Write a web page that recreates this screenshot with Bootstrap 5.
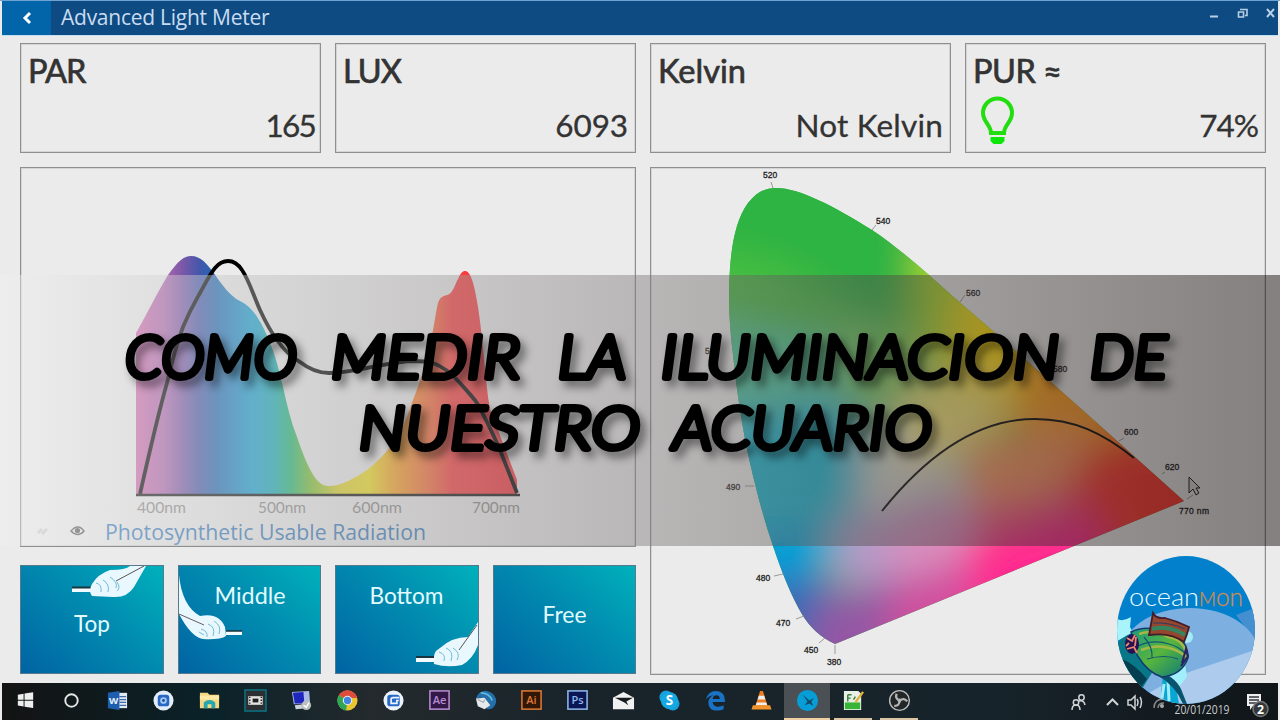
<!DOCTYPE html>
<html lang="es">
<head>
    <meta charset="UTF-8">
    <meta name="viewport" content="width=device-width, initial-scale=1.0">
    <title>Advanced Light Meter</title>
    <link rel="stylesheet" href="https://cdn.jsdelivr.net/npm/bootstrap@5.3.0/dist/css/bootstrap.min.css">
    <style>
        body {
            width: 1280px;
            height: 720px;
            font-family: 'Lato', sans-serif;
            background-color: #ebebeb;
            color: #333;
            line-height: 1;
        }
        .screen {
            height: 720px;
            padding: 0 2px;
            border-top: 1px solid #6fa3d3;
        }
        .titlebar {
            height: 34px;
            background-color: #0e4b82;
            color: #c9dcf2;
        }
        .back {
            width: 49px;
            background-color: #0264a9;
        }
        .app-title {
            font: 21px 'Open Sans', sans-serif;
            letter-spacing: -.25px;
            padding: 0 0 2px 10px;
            white-space: nowrap;
        }
        .meter {
            display: grid;
            grid-template-columns: repeat(4, 1fr);
            grid-template-rows: 110px 394px 128px;
            column-gap: 14px;
            padding: 7px 12px 0 18px;
            border-top: 1px solid #c3dff2;
        }
        .box {
            border: 1px solid #8f8f8f;
            box-shadow: inset 0 0 0 1px #d4d4d4;
        }
        .reading {
            padding: 11px 7px 11px;
            font-size: 32.5px;
        }
        .reading .name { -webkit-text-stroke: .7px #333; }
        .reading .value {
            font-size: 31.5px;
            letter-spacing: -.1px;
            -webkit-text-stroke: .3px #333;
        }
        .wide { grid-column: span 2; margin-top: 14px; }
        .tall { grid-row: span 2; }
        .caption { height: 27px; font-family: 'Open Sans', sans-serif; }
        .place {
            margin-top: 18px;
            margin-bottom: 1px;
            border: 1px solid #58788c;
            border-radius: 0;
            background: linear-gradient(42deg, #0163a3 0%, #018db0 58%, #00b1bb 100%);
            font-size: 22.5px;
            -webkit-text-stroke: .7px #e2fbff;
        }
        .taskbar {
            height: 37px;
            margin-top: 8px;
            background: linear-gradient(90deg, #131313 0, #0a2229 210px, #242a2d 370px, #19242a 560px, #17232a 1000px, #101518 100%);
        }
        .task { width: 46px; border-bottom: 2px solid transparent; }
        .task.open { border-color: #dcc6a4; margin: 0 4px; width: 38px; }
        .task.active { background-color: #4a5053; border-color: #f0cfa2; }
        .tray { font: 12.3px 'Open Sans', sans-serif; }
        .band {
            top: 275px;
            height: 271px;
            background: linear-gradient(90deg, rgba(240, 240, 240, .455), rgba(10, 0, 0, .455));
        }
        .headline {
            font: italic 300 60px 'Lato', sans-serif;
            stroke: #000;
            stroke-width: 6;
            stroke-linejoin: round;
            filter: drop-shadow(5px 6px 4px rgba(0, 0, 0, .45));
        }
        .brand { left: 1117px; top: 556px; }
        svg { display: block; }
    </style>
</head>
<body class="m-0 overflow-hidden position-relative">
    <div class="screen">
        <header class="titlebar d-flex">
            <div class="back d-flex align-items-center justify-content-center">
                <svg width="14" height="16" viewBox="0 0 14 16"><path d="M10 3 5 8l5 5" fill="none" stroke="#fff" stroke-width="3"/></svg>
            </div>
            <div class="app-title flex-grow-1 d-flex align-items-center">Advanced Light Meter</div>
            <svg width="72" height="24" viewBox="1206 1 72 24" fill="none" stroke="#b9cfe6" stroke-width="2">
                <path d="M1210 16.500h8"/>
                <path d="M1240 9.500h7v6h-2M1238.500 12h5v5h-5z" stroke-width="1.600"/>
                <path d="M1267 9l7 8M1274 9l-7 8"/>
            </svg>
        </header>

        <main class="meter">
            <div class="box reading d-flex flex-column justify-content-between">
                <div class="name" style="letter-spacing:-1px">PAR</div>
                <div class="value text-end" style="letter-spacing:-1.800px;margin-right:-2px">165</div>
            </div>
            <div class="box reading d-flex flex-column justify-content-between">
                <div class="name" style="letter-spacing:-1px">LUX</div>
                <div class="value text-end">6093</div>
            </div>
            <div class="box reading d-flex flex-column justify-content-between">
                <div class="name">Kelvin</div>
                <div class="value text-end" style="letter-spacing:.2px">Not Kelvin</div>
            </div>
            <div class="box reading d-flex flex-column justify-content-between">
                <div class="name" style="letter-spacing:-.5px">PUR ≈</div>
                <div class="value d-flex justify-content-between align-items-end">
                    <svg width="52" height="31" viewBox="973 111 52 31" overflow="visible">
                        <path d="M991 134c0-8-8-11-8-20a14.500 14.500 0 0 1 29 0c0 9-8 12-8 20z" fill="none" stroke="#22dd10" stroke-width="4"/>
                        <path d="M990.500 138h14v4l-3 3h-8l-3-3z" fill="#0ee60a"/>
                    </svg>
                    <span style="letter-spacing:-1px">74%</span>
                </div>
            </div>

            <section class="box wide d-flex flex-column">
                <svg width="614" height="350" viewBox="21 168 614 350">
                    <defs>
                        <linearGradient id="spectrum" gradientUnits="userSpaceOnUse" x1="137" y1="0" x2="517" y2="0">
                            <stop offset="0" stop-color="#d169ae"/>
                            <stop offset=".07" stop-color="#b066b0"/>
                            <stop offset=".12" stop-color="#7a58a8"/>
                            <stop offset=".165" stop-color="#4357ab"/>
                            <stop offset=".21" stop-color="#1d6ab5"/>
                            <stop offset=".3" stop-color="#129fd6"/>
                            <stop offset=".36" stop-color="#12aeb8"/>
                            <stop offset=".405" stop-color="#1fb873"/>
                            <stop offset=".455" stop-color="#75c033"/>
                            <stop offset=".53" stop-color="#e0d52a"/>
                            <stop offset=".61" stop-color="#f2e220"/>
                            <stop offset=".68" stop-color="#faa424"/>
                            <stop offset=".77" stop-color="#fb6c3a"/>
                            <stop offset=".83" stop-color="#fb3e40"/>
                            <stop offset="1" stop-color="#f6363e"/>
                        </linearGradient>
                    </defs>
                    <path fill="url(#spectrum)" d="M136 494V333C147 314 157 293 168 275C178 261 184 256 191 256C201 256 207 264 213 272C222 285 231 297 240 301C251 306 257 316 263 327C273 347 278 365 283 387C287 405 291 422 297 437C307 466 316 486 328 486C342 486 355 478 367 470C377 462 384 455 390 447C402 432 406 420 413 400C419 385 425 367 428 353C434 330 435 315 438 303C440 297 443 296 447 295C453 294 455 284 458 279C461 272 463 271 465 271C470 271 474 281 478 307C482 333 485 370 488 397C490 409 491 414 493 417L517 480V494Z"/>
                    <path fill="none" stroke="#000" stroke-width="3.800" d="M140 494C149 454 159 411 167 383C172 361 177 343 183 327C190 310 195 302 200 293C206 282 210 274 215 268C220 262 224 261 228 261C234 261 238 264 242 270C249 280 254 297 260 310C266 323 271 332 277 340C284 350 291 357 300 362C309 369 317 373 329 373C346 373 354 370 367 368C384 365 396 362 410 361C419 361 427 361 433 363C444 367 453 375 460 383C467 391 472 396 477 403C486 419 493 434 500 450L517 493"/>
                    <path d="M136 495H520" stroke="#111" stroke-width="2.600"/>
                    <g font-size="14.500" fill="#888">
                        <text x="137" y="513" textLength="49" lengthAdjust="spacingAndGlyphs">400nm</text>
                        <text x="258" y="513" textLength="48" lengthAdjust="spacingAndGlyphs">500nm</text>
                        <text x="352" y="513" textLength="50" lengthAdjust="spacingAndGlyphs">600nm</text>
                        <text x="472" y="513" textLength="48" lengthAdjust="spacingAndGlyphs">700nm</text>
                    </g>
                </svg>
                <div class="caption d-flex align-items-center">
                    <svg width="84" height="27" viewBox="21 518 84 27" fill="none">
                        <path d="M38 533l4-4M42 534l5-5" stroke="#ccc" stroke-width="3"/>
                        <path d="M71 531q7-8 13 0q-6 7-13 0z" stroke="#555" stroke-width="1.500"/>
                        <circle cx="77.500" cy="530.500" r="2.600" fill="#555"/>
                    </svg>
                    <svg width="330" height="27" viewBox="105 518 330 27" overflow="visible"><text x="105" y="539.500" textLength="321" lengthAdjust="spacingAndGlyphs" font-size="21.500" fill="#3178bb">Photosynthetic Usable Radiation</text></svg>
                </div>
            </section>

            <section class="box wide tall">
                <svg width="614" height="505" viewBox="651 168 614 505">
                    <defs>
                        <clipPath id="locus"><path d="M776 188C800 188 835 207 872 230C902 250 930 276 957 300C1035 367 1110 434 1184 501L835 644C820 637 810 627 803 616C791 596 781 570 773 546C764 520 757 493 750 463C743 432 737 394 733 355C729 320 728 295 730 268C732 241 737 218 748 203C757 192 765 188 776 188Z"/></clipPath>
                        <filter id="soft" x="-50%" y="-50%" width="200%" height="200%"><feGaussianBlur stdDeviation="18"/></filter>
                    </defs>
                    <g clip-path="url(#locus)">
                        <rect x="652" y="169" width="612" height="503" fill="#2db442"/>
                        <g filter="url(#soft)">
                            <path d="M690 150H890L930 280L870 330L690 250Z" fill="#2db442"/>
                            <path d="M690 245L780 265L850 310L850 340L690 340Z" fill="#46be42"/>
                            <path d="M690 320L830 340L880 430L690 440Z" fill="#4bc79b"/>
                            <path d="M830 320L950 330L950 430L840 430Z" fill="#6fc860"/>
                            <path d="M920 220L1040 290L1000 410L910 350Z" fill="#a9d62c"/>
                            <path d="M965 275L1120 330L1060 430L940 420Z" fill="#ffe010"/>
                            <path d="M1030 330L1160 360L1240 480L1060 490L1010 420Z" fill="#ffa022"/>
                            <path d="M650 420L850 400L880 490L830 560L650 560Z" fill="#18b6cf"/>
                            <path d="M865 430L950 400L970 510L860 540Z" fill="#d4d6c8"/>
                            <path d="M900 385L1000 385L1000 450L910 460Z" fill="#f4e678"/>
                            <path d="M970 440L1080 430L1110 490L1040 520L960 510Z" fill="#fa9a64"/>
                            <path d="M1100 440L1180 430L1260 500L1240 570L1080 560L1060 490Z" fill="#ff3c34"/>
                            <path d="M960 510L1080 490L1080 540L950 550Z" fill="#f44f80"/>
                            <path d="M650 535L830 525L815 590L700 600Z" fill="#009cd6"/>
                            <path d="M700 590L835 575L815 690L700 690Z" fill="#3868b4"/>
                            <path d="M840 520L950 490L950 570L830 590Z" fill="#b59ac8"/>
                            <path d="M900 520L980 495L970 570L880 570Z" fill="#da8fbe"/>
                            <path d="M820 600L910 575L910 690L790 700Z" fill="#9456a4"/>
                            <path d="M890 585L990 550L1000 660L890 680Z" fill="#d0509e"/>
                            <path d="M965 545L1090 510L1130 590L980 660Z" fill="#ff2b90"/>
                        </g>
                    </g>
                    <path d="M882 511C930 451 980 419 1035 419C1074 419 1103 433 1134 458" fill="none" stroke="#111" stroke-width="2"/>
                    <path d="M771 182l2 6M872 230l4-5M960 302l5-7M745 486h9M774 576l9-2M796 619l8-3M819 643l6-5M835 645v9M1119 441l5-3M1162 474l3-2M1187 499l6-4" stroke="#999"/>
                    <g font-family="Liberation Sans, sans-serif" font-size="8.500" fill="#222" stroke="#222" stroke-width=".3">
                        <text x="763" y="178">520</text>
                        <text x="876" y="224">540</text>
                        <text x="966" y="296">560</text>
                        <text x="1053" y="372">580</text>
                        <text x="1124" y="435">600</text>
                        <text x="1165" y="470">620</text>
                        <text x="1179" y="514" textLength="30">770 nm</text>
                        <text x="705" y="354">500</text>
                        <text x="726" y="490">490</text>
                        <text x="756" y="581">480</text>
                        <text x="776" y="626">470</text>
                        <text x="804" y="653">450</text>
                        <text x="827" y="665">380</text>
                    </g>
                    <path d="M1189 477v16l4-4 3 6 3-2-3-5h4z" fill="#ddd" stroke="#222"/>
                </svg>
            </section>

            <div class="wide d-flex mt-0" style="gap:14px">
                <button class="place btn flex-fill w-25 p-0">
                    <svg width="100%" height="100%" viewBox="21 566 141.500 107">
                        <path d="M72 587h20v5H72z" fill="#f2fbff"/><path d="M72 587.500h20" stroke="#18343f" stroke-width="2"/>
                        <path d="M146 566L134 587Q127 598 113 597L92 596Q88 591 92 584Q98 574 110 570Q126 570 130 566Z" fill="#e9f8ff"/>
                        <path d="M144 566L116 581" stroke="#555"/><path d="M96 583q6 1 5 9M103 580q7 4 5 12M110 577q8 5 6 11M117 582q4 6 0 9" fill="none" stroke="#70bcd5"/>
                        <text x="92" y="632" text-anchor="middle" fill="#e2fbff" textLength="36" lengthAdjust="spacingAndGlyphs">Top</text>
                    </svg>
                </button>
                <button class="place btn flex-fill w-25 p-0">
                    <svg width="100%" height="100%" viewBox="178 566 141.500 107">
                        <path d="M178 575Q181 606 199 616Q218 612 224 627L225 636Q219 640 202 639Q190 637 178 614Z" fill="#e9f8ff"/>
                        <path d="M178 614L203 625" stroke="#6a5a60"/><path d="M200 629q7 2 6 8M207 624q8 3 5 12M213 621q8 5 5 13M198 632l5 3" fill="none" stroke="#70bcd5"/>
                        <path d="M225 631h16v4h-16z" fill="#f2fbff"/><path d="M225 631h16" stroke="#18343f" stroke-width="1.500"/>
                        <text x="249" y="604" text-anchor="middle" fill="#e2fbff" textLength="71" lengthAdjust="spacingAndGlyphs">Middle</text>
                    </svg>
                </button>
                <button class="place btn flex-fill w-25 p-0">
                    <svg width="100%" height="100%" viewBox="336 566 141.500 107">
                        <path d="M478 622L468 637Q452 637 440 648Q432 652 434 664Q447 668 462 665Q473 659 478 645Z" fill="#e9f8ff"/>
                        <path d="M477 625L459 650" stroke="#555"/><path d="M439 652q7 2 5 9M446 648q8 3 5 13M453 648q8 5 4 12" fill="none" stroke="#70bcd5"/>
                        <path d="M416 657h18v5h-18z" fill="#f2fbff"/><path d="M416 657h18" stroke="#18343f" stroke-width="2"/>
                        <text x="406.500" y="604" text-anchor="middle" fill="#e2fbff" textLength="74" lengthAdjust="spacingAndGlyphs">Bottom</text>
                    </svg>
                </button>
                <button class="place btn flex-fill w-25 p-0">
                    <svg width="100%" height="100%" viewBox="493 566 141.500 107">
                        <text x="563.500" y="622.500" text-anchor="middle" fill="#e2fbff" textLength="44" lengthAdjust="spacingAndGlyphs">Free</text>
                    </svg>
                </button>
            </div>
        </main>

        <footer class="taskbar d-flex justify-content-between">
            <div class="d-flex" id="tasks"></div>
            <div class="tray d-flex">
                <svg width="216" height="37" viewBox="1062 683 216 37" fill="none" stroke="#d0d4d6" stroke-width="1.500">
                    <circle cx="1081.500" cy="697.500" r="2.700"/><circle cx="1076" cy="702.500" r="2.700"/>
                    <path d="M1072 710q0-5 4-5t4 5M1079 701q5-1 6 4"/>
                    <path d="M1107 705l5.500-5.500 5.500 5.500" stroke-width="2"/>
                    <path d="M1128 700h3l4-4v13l-4-4h-3zM1137 699q2 3 0 7M1140 697q3 5 0 11"/>
                    <path d="M1154 708q0-9 10-9M1158 708q0-5 6-5" stroke="#888"/><circle cx="1162" cy="706" r="2" fill="#aaa" stroke="none"/>
                    <text x="1174.500" y="714" textLength="55" lengthAdjust="spacingAndGlyphs" fill="#c9cdcf" stroke="none">20/01/2019</text>
                    <path d="M1247 694h14v12h-8l-3 4v-4h-3z" fill="#eee" stroke="none"/><path d="M1249 697h10M1249 700h10M1249 703h7" stroke="#30363a"/>
                    <circle cx="1260.500" cy="709" r="7.500" fill="#34383a" stroke="#777"/>
                    <text x="1257" y="713.500" fill="#fff" stroke="none" font-weight="700">2</text>
                </svg>
            </div>
        </footer>
    </div>

    <div class="band position-absolute start-0 w-100">
        <svg class="headline" width="1280" height="271" viewBox="0 275 1280 271">
            <text x="125" y="378" textLength="172" lengthAdjust="spacingAndGlyphs">COMO</text>
            <text x="331" y="378" textLength="189" lengthAdjust="spacingAndGlyphs">MEDIR</text>
            <text x="558" y="378" textLength="68" lengthAdjust="spacingAndGlyphs">LA</text>
            <text x="661" y="378" textLength="398" lengthAdjust="spacingAndGlyphs">ILUMINACION</text>
            <text x="1090" y="378" textLength="77" lengthAdjust="spacingAndGlyphs">DE</text>
            <text x="359" y="449" textLength="281" lengthAdjust="spacingAndGlyphs">NUESTRO</text>
            <text x="673" y="449" textLength="259" lengthAdjust="spacingAndGlyphs">ACUARIO</text>
        </svg>
    </div>

    <div class="brand position-absolute">
        <svg width="138" height="148" viewBox="1117 556 138 148">
            <defs>
                <clipPath id="disc"><ellipse cx="1186" cy="630" rx="69" ry="74"/></clipPath>
                <linearGradient id="fish" x1="0" y1="0" x2="1" y2="1"><stop offset="0" stop-color="#1a9a80"/><stop offset=".5" stop-color="#58b53c"/><stop offset="1" stop-color="#087880"/></linearGradient>
            </defs>
            <g clip-path="url(#disc)">
                <path fill="#0380cb" d="M1117 556h138v148h-138z"/>
                <path fill="#448fd0" d="M1236 615L1255 608V640Z"/>
                <ellipse cx="1190" cy="655" rx="69" ry="47" fill="#7db0e1"/>
                <path d="M1255 650L1180 675L1130 704H1255Z" fill="#adcbec"/>
                <path d="M1117 619q6 3 14-2l-1 10 3 6-16 8z" fill="#a8f4fa"/>
                <path d="M1117 643q9-10 24-12l12 40-11 18q-17-11-25-33z" fill="#087787"/>
                <path d="M1120 658q15 6 27 21l-9 12q-18-15-18-33z" fill="#033f50"/>
                <circle cx="1187" cy="637" r="6" fill="#a5eaf8"/>
                <path d="M1170 676l15-12 2 13-8 10z" fill="#a1effa"/>
                <path d="M1163 676l-2 16q-1 10 18 12l-3-17z" fill="#08a7d3"/><path d="M1168 680l1 21M1164 684l-2 14" stroke="#a4ecf8" stroke-width="3"/>
                <path d="M1157 672q17 3 24 17l6 15h-4q-7-18-26-29z" fill="#08546e"/>
                <path d="M1131 632Q1150 622 1178 638Q1188 643 1188 658Q1182 675 1162 677Q1148 673 1137 655Z" fill="url(#fish)" stroke="#143c70" stroke-width="1.500"/>
                <path d="M1139 634q15-5 29 3q14 2 18 15M1141 650q16-6 28-2q12 3 18 10" fill="none" stroke="#a5b843" stroke-width="2.500"/>
                <path d="M1138 646q15-7 31-2q9 2 17 10M1147 659q18-5 31 0M1144 637q9 10 8 21" fill="none" stroke="#135477" stroke-width="1.200"/>
                <path d="M1153 613q3 6 12 5q12 3 24 9q-2 8-5 15q-13-10-35-7z" fill="#94462e" stroke="#431e2a" stroke-width="1.800"/>
                <path d="M1152 629q16-4 33 6" fill="none" stroke="#34845f" stroke-width="4"/><path d="M1153 623q16-1 32 6" fill="none" stroke="#293c65"/>
                <ellipse cx="1132" cy="644" rx="7" ry="10" fill="#251354"/>
                <path d="M1127 638l5 3 3-6M1127 649l7-2 3 6M1136 637l-1 9M1129 643l-3 3" fill="none" stroke="#f0866d" stroke-width="1.800"/>
                <path d="M1182 663l4-14 2 7-7 10" stroke="#2c2162" fill="none" stroke-width="2"/>
            </g>
            <!-- round thin lettering of the logo -->
            <g font-family="Lato, sans-serif" font-weight="300" font-size="26">
                <text x="1129" y="606" textLength="70" lengthAdjust="spacingAndGlyphs" fill="#e9fbff">ocean</text>
                <text x="1199" y="606" textLength="17" lengthAdjust="spacingAndGlyphs" font-size="20" fill="#d08c4e" stroke="#d08c4e" stroke-width=".3">M</text>
                <text x="1216" y="606" textLength="27" lengthAdjust="spacingAndGlyphs" fill="#d08c4e" stroke="#d08c4e" stroke-width=".3">on</text>
            </g>
        </svg>
    </div>

    <script src="https://cdn.jsdelivr.net/npm/bootstrap@5.3.0/dist/js/bootstrap.bundle.min.js"></script>
    <script type="text/javascript">
        // every icon is drawn on a 24x24 grid
        const adobe = (label, bg, color) => `<rect x="2" y="2" width="20" height="19" fill="${bg}" stroke="${color}" stroke-width="1.600"/><text x="12" y="16" text-anchor="middle" font-family="Open Sans, sans-serif" font-size="11.500" font-weight="600" fill="${color}">${label}</text>`;
        const icons = [
            '<path d="M4 6l6-1v6.300H4zM11 4.800l9-1.300v7.800h-9zM4 12.300h6v6l-6-1zM11 12.300h9v7.500l-9-1.200z" fill="#eee"/>',
            '<circle cx="12" cy="12" r="6.500" fill="none" stroke="#e4e4e4" stroke-width="2"/>',
            '<path d="M12 4h10v16H12z" fill="#dfe9f5"/><path d="M14 8h7M14 11h7M14 14h7M14 17h7" stroke="#3f6ca8" stroke-width="1.300"/><path d="M2 4l12-2v20L2 20z" fill="#1d5fae"/><text x="8" y="16" text-anchor="middle" font-family="Open Sans, sans-serif" font-size="10" font-weight="700" fill="#e6f2ff">W</text>',
            '<circle cx="12" cy="12" r="10.500" fill="#e3edf8"/><rect x="6" y="6" width="12" height="12" rx="3" fill="#2867c4"/><circle cx="12" cy="12" r="3.500" fill="#a6c9f1"/><circle cx="12" cy="12" r="1.500" fill="#194fa8"/>',
            '<path d="M2 4h8l2 2h10v14H2z" fill="#f5d982"/><path d="M2 7h20v4H2z" fill="#fde9a5"/><path d="M6 20v-6q6-5 12 0v6h-4v-4h-4v4z" fill="#25a6b1"/>',
            '<rect x="1" y="1" width="22" height="22" fill="#2c3033" stroke="#087686" stroke-width="1.500"/><path d="M4.500 7.500h15v9h-15z" fill="#e3e3e3"/><path d="M9 10h6v4H9z" fill="#222"/><path d="M6 8v8M18 8v8" stroke="#222" stroke-width="1.500" stroke-dasharray="1.500"/>',
            '<path d="M2 3l18-1 1 13-17 1z" fill="#aab9e8"/><path d="M3 4l11-1 1 12H5z" fill="#1f26be"/><path d="M5 17l9-1 3 4-11 1z" fill="#ccd2db"/><circle cx="17" cy="17" r="5" fill="#b9c0bd"/><path d="M14 17l3 2 3-5" fill="none" stroke="#fff" stroke-width="1.500"/>',
            '<circle cx="12" cy="12" r="10.500" fill="#e9c52f"/><path d="M12 12L3 6.500a10.500 10.500 0 0 1 18 0z" fill="#df4c3d"/><path d="M12 12L3 6.500a10.500 10.500 0 0 0 7.500 16z" fill="#2fa657"/><path d="M8 6.500h13l1 3H9z" fill="#df4c3d"/><circle cx="12" cy="12" r="4.900" fill="#eee"/><circle cx="12" cy="12" r="3.800" fill="#4384df"/>',
            '<circle cx="12" cy="12" r="10.500" fill="#edf3fa"/><rect x="5.500" y="6" width="13" height="12" rx="3" fill="#2867c4"/><path d="M18 9h-6.500q-2 0-2 2v4h6v-3h2" fill="none" stroke="#e9f4ff" stroke-width="1.800"/>',
            adobe('Ae', '#321846', '#b78dd2'),
            '<path d="M2 10Q5 1 14 2q10 3 9 12-2 8-10 7 4-8-3-11-3-2-8 0z" fill="#246fa9"/><path d="M7 4q9 0 12 8" fill="none" stroke="#62b6da" stroke-width="2"/><path d="M2 10l9-1 6 8-6 4-7-3z" fill="#e5e9eb"/><path d="M4 11l6 3 1-3" fill="none" stroke="#8999a5"/>',
            adobe('Ai', '#321707', '#dd7834'),
            adobe('Ps', '#0b1755', '#8fb8ed'),
            '<path d="M1 9l11-6 11 6v12H1z" fill="#f1f1f1"/><path d="M3 9h19l-7 4 2 4-4-3z" fill="#161b1d"/>',
            '<circle cx="8.500" cy="8.500" r="7" fill="#169fdc"/><circle cx="15.500" cy="15.500" r="7" fill="#169fdc"/><circle cx="12" cy="12" r="9" fill="#16a8e3"/><text x="12" y="17" text-anchor="middle" font-family="Open Sans, sans-serif" font-size="14" font-weight="700" fill="#fff">S</text>',
            '<path d="M2 11Q4 2 12.500 2Q22 2 22 13.500H9Q9.500 18.500 15 18.500Q18 18.500 20.500 17v4Q17.500 22.500 14 22.500Q4.500 22.500 4.500 14Q4.500 9 10 6.500Q5 7 2 11zM9 10.500h7.500Q16.500 6.500 13 6.500Q9.500 6.500 9 10.500z" fill="#1a72c5" fill-rule="evenodd"/>',
            '<path d="M10.500 2h3l5 16h-13z" fill="#ed7d20"/><path d="M9.200 7h5.600l1.200 4H8zM7 14h10l1 3H6z" fill="#eee"/><path d="M3 17h18l1.500 4.500h-21z" fill="#ef932a"/>',
            '<circle cx="12" cy="12" r="11" fill="#079ed8"/><path d="M7 6l7 6 5-3-3 4 2 5-4-3-5 2 3-4z" fill="#124b68"/>',
            '<path d="M2 2h15l3 3v17H2z" fill="#e8efe6"/><path d="M3 14h16v7H3z" fill="#36b537"/><path d="M6 13V6M6 6h4M6 9.500h3M12 11l2-3" stroke="#3a7e3a" fill="none" stroke-width="1.500"/><path d="M14 14l8-11" stroke="#dfb33a" stroke-width="2.500"/>',
            '<circle cx="12" cy="12" r="10.300" fill="#222627" stroke="#bbb" stroke-width="1.500"/><path d="M12 12Q7 10 9 5M12 12Q17 8.500 20 13M12 12Q12 18 6.500 17.500" fill="none" stroke="#b5b5b5" stroke-width="2.400"/><circle cx="12" cy="12" r="2" fill="#b5b5b5"/>'
        ];
        const states = { 17: 'active', 18: 'open', 19: 'open' };

        document.getElementById('tasks').innerHTML = icons.map((icon, i) => `
            <div class="task d-flex align-items-center justify-content-center ${states[i] || ''}">
                <svg width="23" height="23" viewBox="0 0 24 24">${icon}</svg>
            </div>`).join('');
    </script>
</body>
</html>
